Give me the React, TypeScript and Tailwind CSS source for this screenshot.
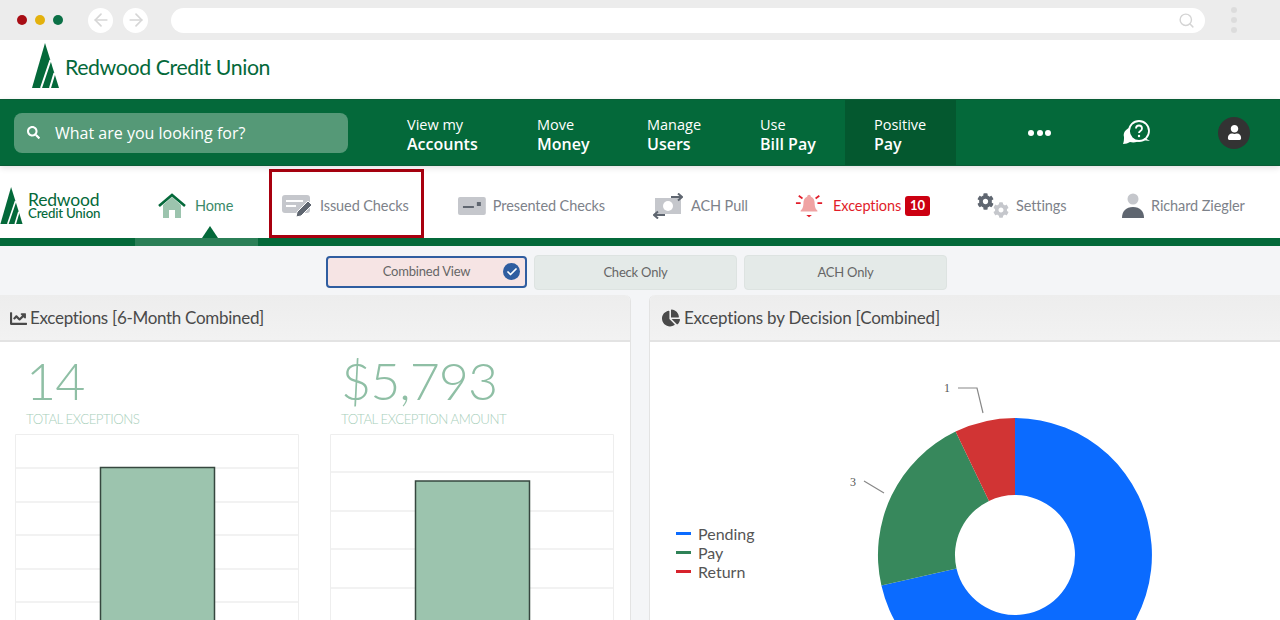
import { Search, ArrowLeft, ArrowRight, Check } from "lucide-react"
import { FaChartLine, FaChartPie, FaCog, FaUser, FaSearch } from "react-icons/fa"

const mainNav = [
  { top: "View my", bottom: "Accounts", width: "w-[130px]" },
  { top: "Move", bottom: "Money", width: "w-[110px]" },
  { top: "Manage", bottom: "Users", width: "w-[113px]" },
  { top: "Use", bottom: "Bill Pay", width: "w-[85px]" },
]

function TreeLogo({ className }: { className: string }) {
  return (
    <svg viewBox="0 0 27 45" className={className}>
      <polygon points="13,0 0,45 27,45" fill="#04693a" />
      <path d="M18.500 17L9 45M22.500 30L18 45" stroke="#fff" strokeWidth="2" fill="none" />
    </svg>
  )
}

function PencilCardIcon() {
  return (
    <svg viewBox="0 0 32 24" className="w-8 h-6">
      <rect x="0" y="1" width="28" height="18" rx="3" fill="#c5c7cc" />
      <rect x="4" y="6" width="17" height="2" fill="#fff" />
      <rect x="4" y="11" width="10" height="2" fill="#fff" />
      <path d="M14 23l1-5L26 7l4 4-11 11z" fill="#5f6670" stroke="#fff" strokeWidth="1" />
    </svg>
  )
}

function PresentedIcon() {
  return (
    <svg viewBox="0 0 28 18" className="w-7 h-[18px]">
      <rect width="28" height="18" rx="2" fill="#c5c7cc" />
      <rect x="5" y="9" width="11" height="2" fill="#5f6670" />
      <rect x="19" y="5" width="4" height="4" fill="#5f6670" />
    </svg>
  )
}

function AchIcon() {
  return (
    <svg viewBox="0 0 30 26" className="w-[30px] h-[26px]" fill="none">
      <rect x="2" y="5" width="26" height="16" fill="#c5c7cc" />
      <circle cx="15" cy="13" r="5" fill="#fff" />
      <path d="M18 4h11M25 0.500L29 4l-4 3.500" stroke="#5f6670" strokeWidth="2" />
      <path d="M12 22H1M5 18.500L1 22l4 3.500" stroke="#5f6670" strokeWidth="2" />
    </svg>
  )
}

function BellIcon() {
  return (
    <svg viewBox="0 0 30 26" className="w-[30px] h-[26px]">
      <path d="M15 1c-1 0-2 1-2 2-3 1-4 4-4 7 0 5-2 7-3 8v1h18v-1c-1-1-3-3-3-8 0-3-1-6-4-7 0-1-1-2-2-2z" fill="#f0a3a3" />
      <path d="M12 22.500h6l-3 2.500z" fill="#e11d2a" />
      <path d="M1 10h5M24 10h5M4 2l4 3M26 2l-4 3" stroke="#e11d2a" strokeWidth="1.800" />
    </svg>
  )
}

function GearsIcon() {
  return (
    <div className="flex w-8 h-[26px]">
      <FaCog className="w-[17px] h-[17px] text-[#5f6670]" />
      <FaCog className="w-[16px] h-[16px] mt-[9px] ml-[-1px] text-[#c5c7cc]" />
    </div>
  )
}

function PersonIcon() {
  return (
    <svg viewBox="0 0 22 26" className="w-[22px] h-[26px]">
      <circle cx="11" cy="6" r="5.500" fill="#c5c7cc" />
      <path d="M0 25c0-7 4-11 11-11s11 4 11 11z" fill="#5f6670" />
    </svg>
  )
}

function HomeIcon() {
  return (
    <svg viewBox="0 0 28 26" className="w-7 h-[26px]">
      <path d="M5 12L14 4l9 8v13h-6v-8h-6v8H5z" fill="#9cc4ae" />
      <path d="M1 13L14 2l13 11" fill="none" stroke="#04693a" strokeWidth="2.600" />
    </svg>
  )
}

function HelpIcon() {
  return (
    <svg viewBox="0 0 28 26" className="w-7 h-[26px]" fill="none">
      <path d="M6 8C2 10 0 13 1 17c0 2 0 4-1 7 3 0 5-1 7-2 4 1 8 0 10-2z" fill="#fff" />
      <circle cx="16" cy="11" r="10" fill="#04693a" stroke="#fff" strokeWidth="1.800" />
      <path d="M22 18l5 3-8-1z" fill="#fff" />
      <path d="M13 8.500c0-2 1.500-3 3-3s3 1 3 3c0 2.500-3 2.500-3 4.500" stroke="#fff" strokeWidth="1.800" />
      <circle cx="16" cy="16" r="1.200" fill="#fff" />
    </svg>
  )
}

function Toggle({ label, active }: { label: string; active?: boolean }) {
  if (active) {
    return (
      <div className="relative w-[201px] h-8 mt-px flex items-center justify-center rounded border-2 border-[#2f5da0] bg-[#f6e4e4] text-[13px] tracking-[-0.2px] text-[#666]">
        {label}
        <span className="absolute right-[5px] top-[5px] w-[17px] h-[17px] rounded-full bg-[#2f5da0] flex items-center justify-center">
          <Check className="w-3 h-3 text-white" strokeWidth={3.5} />
        </span>
      </div>
    )
  }
  return (
    <div className="w-[203px] h-[35px] flex items-center justify-center rounded bg-[#e4eae8] border border-[#dde3e1] text-[13px] tracking-[-0.2px] text-[#666]">
      {label}
    </div>
  )
}

function BarChart({ lines, barTop }: { lines: number[]; barTop: number }) {
  return (
    <svg viewBox="0 0 284 186" className="w-[284px] h-[186px] block">
      <path d="M0.500 186V0.500H283.500V186" fill="none" stroke="#eeeeee" />
      {lines.map((y) => (
        <line key={y} x1="0" x2="284" y1={y} y2={y} stroke="#eeeeee" strokeWidth="1.500" />
      ))}
      <rect x="85.500" y={barTop} width="114" height="200" fill="#9cc4ae" stroke="#36473f" strokeWidth="1.500" />
    </svg>
  )
}

function Donut() {
  return (
    <svg viewBox="0 -72 320 350" className="w-[320px] h-[350px] block">
      <path d="M170 4A137 137 0 1 1 36.400 171.600L111.500 154.400A60 60 0 1 0 170 81z" fill="#0b6bff" />
      <path d="M110.600 17.600A137 137 0 0 0 36.400 171.600L111.500 154.400A60 60 0 0 1 144 86.900z" fill="#37885c" />
      <path d="M170 4A137 137 0 0 0 110.600 17.600L144 86.900A60 60 0 0 1 170 81z" fill="#d13434" />
      <path d="M113 -26h19l6 25M19 67l20 12" fill="none" stroke="#888888" strokeWidth="1.200" />
    </svg>
  )
}

export default function App() {
  return (
    <div className="w-[1280px] h-[620px] overflow-hidden bg-[#f4f5f7] font-['Lato',sans-serif]">
      {/* browser chrome */}
      <div className="h-10 bg-[#ececec] flex items-center">
        <div className="flex gap-2 ml-[17px] w-[71px]">
          <span className="w-[10px] h-[10px] rounded-full bg-[#a80d15]" />
          <span className="w-[10px] h-[10px] rounded-full bg-[#e3b10d]" />
          <span className="w-[10px] h-[10px] rounded-full bg-[#0b7046]" />
        </div>
        <div className="flex gap-[10px]">
          <span className="w-[25px] h-[25px] rounded-full bg-white flex items-center justify-center">
            <ArrowLeft className="w-5 h-5 text-[#d6d6d6]" />
          </span>
          <span className="w-[25px] h-[25px] rounded-full bg-white flex items-center justify-center">
            <ArrowRight className="w-5 h-5 text-[#d6d6d6]" />
          </span>
        </div>
        <div className="ml-[23px] w-[1034px] h-[25px] rounded-full bg-white flex items-center justify-end pr-[10px]">
          <Search className="w-[17px] h-[17px] text-[#d4d4d4]" />
        </div>
        <div className="ml-[26px] flex flex-col gap-1">
          <span className="w-[6px] h-[6px] rounded-full bg-[#dcdcdc]" />
          <span className="w-[6px] h-[6px] rounded-full bg-[#dcdcdc]" />
          <span className="w-[6px] h-[6px] rounded-full bg-[#dcdcdc]" />
        </div>
      </div>

      {/* logo row */}
      <div className="h-[59px] bg-white flex items-center pl-8">
        <TreeLogo className="w-[27px] h-[45px] mt-[-8px]" />
        <span className="ml-[6px] mt-[-4px] text-[21.300px] tracking-[-0.4px] text-[#04693a]">Redwood Credit Union</span>
      </div>

      {/* main nav */}
      <div className="relative h-[67px] bg-[#04693a] border-y border-[#0a5c36] shadow-[0_2px_6px_rgba(0,0,0,0.12)] flex items-stretch font-['Open_Sans',sans-serif] text-white">
        <div className="w-[407px] flex items-center pl-[14px]">
          <div className="w-[334px] h-10 rounded-lg bg-[#559977] flex items-center">
            <FaSearch className="w-[13px] h-[13px] ml-[13px] text-white" />
            <span className="ml-[15px] text-base">What are you looking for?</span>
          </div>
        </div>
        {mainNav.map((item) => (
          <div key={item.bottom} className={`${item.width} pt-[4px] flex flex-col justify-center`}>
            <span className="text-[14.500px] leading-[19px]">{item.top}</span>
            <span className="text-base font-semibold leading-[20px]">{item.bottom}</span>
          </div>
        ))}
        <div className="w-[111px] bg-[#04582f] pl-[29px] pt-[4px] flex flex-col justify-center">
          <span className="text-[14.500px] leading-[19px]">Positive</span>
          <span className="text-base font-semibold leading-[20px]">Pay</span>
        </div>
        <div className="w-[167px] flex items-center justify-center gap-[2.500px]">
          <span className="w-[6px] h-[6px] rounded-full bg-white" />
          <span className="w-[6px] h-[6px] rounded-full bg-white" />
          <span className="w-[6px] h-[6px] rounded-full bg-white" />
        </div>
        <div className="w-[28px] flex items-center">
          <HelpIcon />
        </div>
        <div className="ml-[67px] flex items-center">
          <span className="w-8 h-8 rounded-full bg-[#333333] flex items-center justify-center">
            <FaUser className="w-[15px] h-[15px] text-white" />
          </span>
        </div>
      </div>

      {/* section nav */}
      <div className="h-[72px] bg-white flex items-stretch whitespace-nowrap text-[14.500px] tracking-[-0.1px] text-[#7d828a]">
        <div className="w-[135px] pt-[7px] flex items-center">
          <TreeLogo className="w-[23px] h-[37px]" />
          <div className="ml-[5px] text-[#04693a]">
            <div className="text-[17.500px] leading-[14px] tracking-[-0.2px]">Redwood</div>
            <div className="text-[13.300px] leading-[12px] font-medium tracking-[-0.2px]">Credit Union</div>
          </div>
        </div>
        <div className="relative w-[123px] pt-[7px] pl-[23px] flex items-center gap-[9px] text-[#3b8a6a]">
          <HomeIcon />
          <span>Home</span>
          <span className="absolute bottom-0 left-[75px] -translate-x-1/2 w-0 h-0 border-x-[8px] border-x-transparent border-b-[12px] border-b-[#04693a]" />
        </div>
        <div className="ml-[11px] mt-[3px] w-[155px] h-[69px] pt-[4px] pl-[10px] border-[3px] border-[#a8000f] flex items-center gap-[6px]">
          <PencilCardIcon />
          <span>Issued Checks</span>
        </div>
        <div className="w-[34px]" />
        <div className="w-[147px] pt-[7px] flex items-center gap-[7px]">
          <PresentedIcon />
          <span>Presented Checks</span>
        </div>
        <div className="w-[48px]" />
        <div className="w-[95px] pt-[7px] flex items-center gap-[8px]">
          <AchIcon />
          <span>ACH Pull</span>
        </div>
        <div className="w-[47px]" />
        <div className="w-[135px] pt-[7px] flex items-center gap-[10px] text-[#e11d2a]">
          <BellIcon />
          <span>Exceptions</span>
          <span className="ml-[-6px] px-[5px] h-5 rounded-[3px] bg-[#cc0011] text-white text-[13px] font-bold flex items-center">10</span>
        </div>
        <div className="w-[47px]" />
        <div className="w-[90px] pt-[7px] flex items-center gap-[7px]">
          <GearsIcon />
          <span>Settings</span>
        </div>
        <div className="w-[55px]" />
        <div className="pt-[7px] flex items-center gap-[7px]">
          <PersonIcon />
          <span>Richard Ziegler</span>
        </div>
      </div>

      {/* green band */}
      <div className="h-2 bg-[#04693a] pl-[135px]">
        <div className="w-[123px] h-2 bg-[#2b7f57]" />
      </div>

      {/* view toggles */}
      <div className="h-[49px] pt-[9px] pl-[326px] flex items-start gap-[7px]">
        <Toggle label="Combined View" active />
        <Toggle label="Check Only" />
        <Toggle label="ACH Only" />
      </div>

      {/* panels */}
      <div className="flex gap-[18px]">
        <section className="w-[631px] h-[325px] bg-white rounded-tr-md overflow-hidden border-r border-[#e3e3e3]">
          <div className="h-[47px] pt-px bg-gradient-to-b from-[#ededed] to-[#f2f2f2] border-b-2 border-[#e3e3e3] flex items-center pl-[10px] text-[17px] tracking-[-0.3px] text-[#4a4a4a]">
            <FaChartLine className="w-[17px] h-[17px] mr-[3px]" />
            Exceptions [6-Month Combined]
          </div>
          <div className="flex pl-[15px] gap-[31px]">
            <div className="w-[284px]">
              <div className="pl-[11px] pt-[8px] h-[92px] text-[#8fbfa5]">
                <div className="text-[52px] leading-[60px] tracking-[-1px] font-light">14</div>
                <div className="text-[13.300px] leading-4 mt-px tracking-[-0.5px] font-light text-[#a9cfbb]">TOTAL EXCEPTIONS</div>
              </div>
              <BarChart lines={[34, 68, 101, 135, 168]} barTop={33.500} />
            </div>
            <div className="w-[284px]">
              <div className="pl-[11px] pt-[8px] h-[92px] text-[#8fbfa5]">
                <div className="text-[52px] leading-[60px] tracking-[-1px] font-light">$5,793</div>
                <div className="text-[13.300px] leading-4 mt-px tracking-[-0.5px] font-light text-[#a9cfbb]">TOTAL EXCEPTION AMOUNT</div>
              </div>
              <BarChart lines={[38, 77, 115, 154]} barTop={47} />
            </div>
          </div>
        </section>

        <section className="w-[631px] h-[325px] bg-white rounded-tl-md overflow-hidden border-l border-[#e3e3e3]">
          <div className="h-[47px] pt-px bg-gradient-to-b from-[#ededed] to-[#f2f2f2] border-b-2 border-[#e3e3e3] flex items-center pl-[12px] text-[17px] tracking-[-0.2px] text-[#4a4a4a]">
            <FaChartPie className="w-[18px] h-[18px] mr-[4px]" />
            Exceptions by Decision [Combined]
          </div>
          <div className="flex">
            <div className="w-[169px] ml-[26px] pt-[182px] text-base leading-[19px] text-[#555]">
              <div className="flex items-center gap-[7px]"><span className="w-[15px] h-[3px] bg-[#0b6bff]" />Pending</div>
              <div className="flex items-center gap-[7px]"><span className="w-[15px] h-[3px] bg-[#2f8257]" />Pay</div>
              <div className="flex items-center gap-[7px]"><span className="w-[15px] h-[3px] bg-[#d7222c]" />Return</div>
            </div>
            <div className="relative">
              <Donut />
              <span className="absolute left-[99px] top-[38px] text-xs text-[#555] font-['Liberation_Serif',serif]">1</span>
              <span className="absolute left-[5px] top-[132px] text-xs text-[#555] font-['Liberation_Serif',serif]">3</span>
            </div>
          </div>
        </section>
      </div>
    </div>
  )
}
